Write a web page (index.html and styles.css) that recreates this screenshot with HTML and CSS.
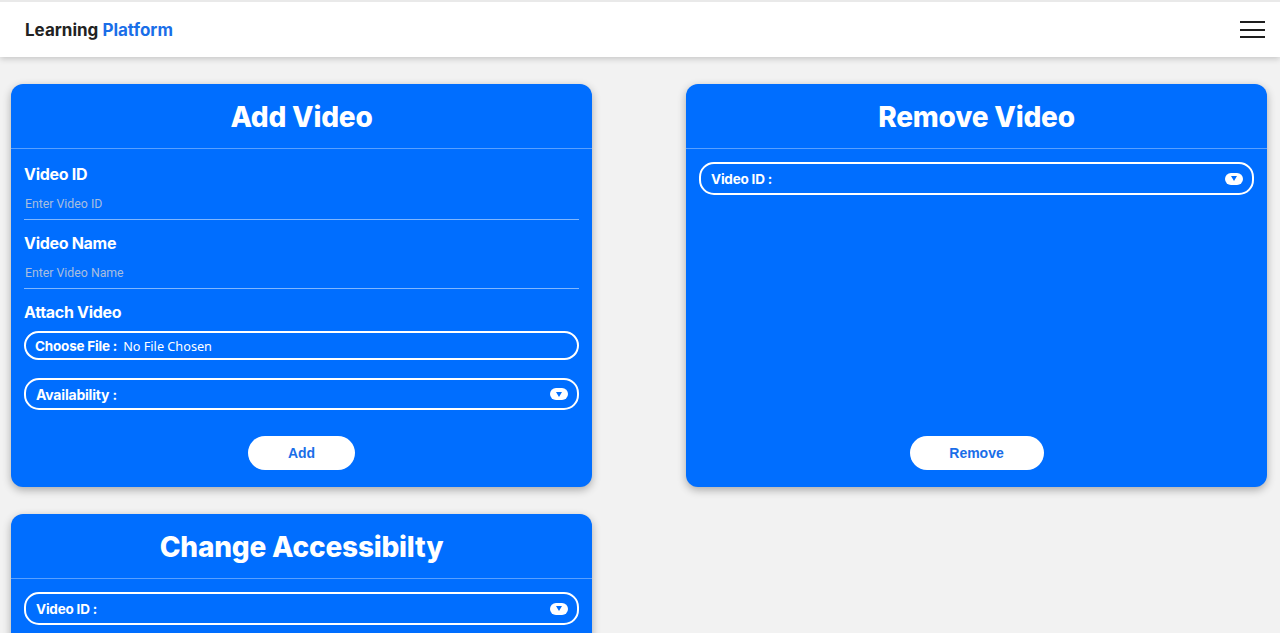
FILE: index.html
```html
<!DOCTYPE html>
<html lang="en">
<head>
<meta charset="utf-8">
<title>Learning Platform</title>
<link rel="stylesheet" href="styles.css">
</head>
<body>
<header class="topbar">
  <div class="brand">Learning <span class="brand-accent">Platform</span></div>
  <button class="menu" aria-label="Menu">
    <span class="menu-line"></span>
    <span class="menu-line"></span>
    <span class="menu-line"></span>
  </button>
</header>
<main class="grid">
  <section class="card">
    <h2 class="card-title">Add Video</h2>
    <div class="card-body">
      <label class="field-label">Video ID</label>
      <div class="text-input">Enter Video ID</div>
      <label class="field-label">Video Name</label>
      <div class="text-input">Enter Video Name</div>
      <label class="field-label">Attach Video</label>
      <div class="pill-box file-box"><span class="pill-key">Choose File :</span><span class="pill-val">No File Chosen</span></div>
      <div class="pill-box select-box avail"><span class="pill-key">Availability :</span><span class="dd"><span class="dd-tri"></span></span></div>
      <div class="actions"><button class="btn btn-add">Add</button></div>
    </div>
  </section>
  <section class="card">
    <h2 class="card-title">Remove Video</h2>
    <div class="card-body card-body-tight">
      <div class="pill-box select-box"><span class="pill-key">Video ID :</span><span class="dd"><span class="dd-tri"></span></span></div>
      <div class="actions"><button class="btn btn-remove">Remove</button></div>
    </div>
  </section>
  <section class="card card-short">
    <h2 class="card-title">Change Accessibilty</h2>
    <div class="card-body card-body-tight">
      <div class="pill-box select-box"><span class="pill-key">Video ID :</span><span class="dd"><span class="dd-tri"></span></span></div>
    </div>
  </section>
</main>
</body>
</html>
```
FILE: styles.css
```css
* { box-sizing: border-box; }
html, body { margin: 0; padding: 0; }
body {
  background: #f2f2f2;
  font-family: Inter, "Noto Sans", sans-serif;
  border-top: 2px solid #e9e9e9;
  padding-bottom: 40px;
}
.topbar {
  height: 55px;
  background: #fff;
  display: flex;
  align-items: center;
  justify-content: space-between;
  padding: 0 14px 0 25px;
  box-shadow: 0 2px 6px rgba(0,0,0,0.18);
  position: relative;
  z-index: 2;
}
.brand {
  font-weight: 700;
  font-size: 17px;
  color: #222;
  letter-spacing: 0;
}
.brand-accent { color: #1a6ee8; }
.menu {
  background: none;
  border: 0;
  padding: 0;
  width: 26px;
  display: flex;
  flex-direction: column;
  gap: 5.5px;
}
.menu-line {
  display: block;
  height: 2px;
  width: 25px;
  background: #1e1e1e;
}
.grid {
  display: grid;
  grid-template-columns: 581px 581px;
  column-gap: 94px;
  row-gap: 27px;
  padding: 27px 0 0 11px;
}
.card {
  background: #006eff;
  border-radius: 12px;
  box-shadow: 0 3px 8px rgba(0,0,0,0.3);
  display: flex;
  flex-direction: column;
  color: #fff;
}
.card:nth-child(-n+2) { height: 403px; }
.card-short { height: 140px; }
.card-title {
  margin: 0;
  height: 65px;
  flex: none;
  display: flex;
  align-items: center;
  justify-content: center;
  font-size: 28px;
  font-weight: 800;
  border-bottom: 1px solid rgba(255,255,255,0.35);
  letter-spacing: -0.2px;
  padding-top: 2px;
}
.card-body {
  flex: 1;
  display: flex;
  flex-direction: column;
  padding: 15px 13px 17px 13px;
}
.card-body-tight { padding-top: 13px; }
.field-label {
  display: block;
  font-size: 16px;
  font-weight: 700;
  line-height: 20px;
  letter-spacing: -0.3px;
}
.text-input {
  height: 36px;
  font-family: Roboto, sans-serif;
  font-size: 12.3px;
  line-height: 14px;
  color: #a9bede;
  padding: 13px 1px 0;
  border-bottom: 1px solid rgba(255,255,255,0.5);
  margin-bottom: 13px;
}
.pill-box {
  border: 2px solid #fff;
  border-radius: 15px;
  display: flex;
  align-items: center;
  padding: 0 9px;
  font-size: 13.5px;
}
.file-box { height: 29px; margin-top: 9px; }
.select-box { height: 33px; justify-content: space-between; padding: 0 9px 0 10px; }
.avail { margin-top: 18px; height: 32px; }
.pill-key { font-weight: 700; letter-spacing: -0.2px; }
.avail .pill-key { font-size: 14px; }
.pill-val { margin-left: 6px; font-family: "Noto Sans", sans-serif; font-size: 12.7px; }
.dd {
  width: 18px;
  height: 12px;
  background: #fff;
  border-radius: 6px;
  display: flex;
  align-items: center;
  justify-content: center;
}
.dd-tri {
  width: 0; height: 0;
  border-left: 3px solid transparent;
  border-right: 3px solid transparent;
  border-top: 5px solid #006eff;
}
.actions {
  margin-top: auto;
  display: flex;
  justify-content: center;
}
.btn {
  background: #fff;
  border: 0;
  height: 34px;
  border-radius: 17px;
  color: #1a6ee8;
  font-family: "Liberation Sans", Arial, sans-serif;
  font-weight: 700;
  font-size: 14px;
}
.btn-add { width: 107px; }
.btn-remove { width: 134px; }
```
